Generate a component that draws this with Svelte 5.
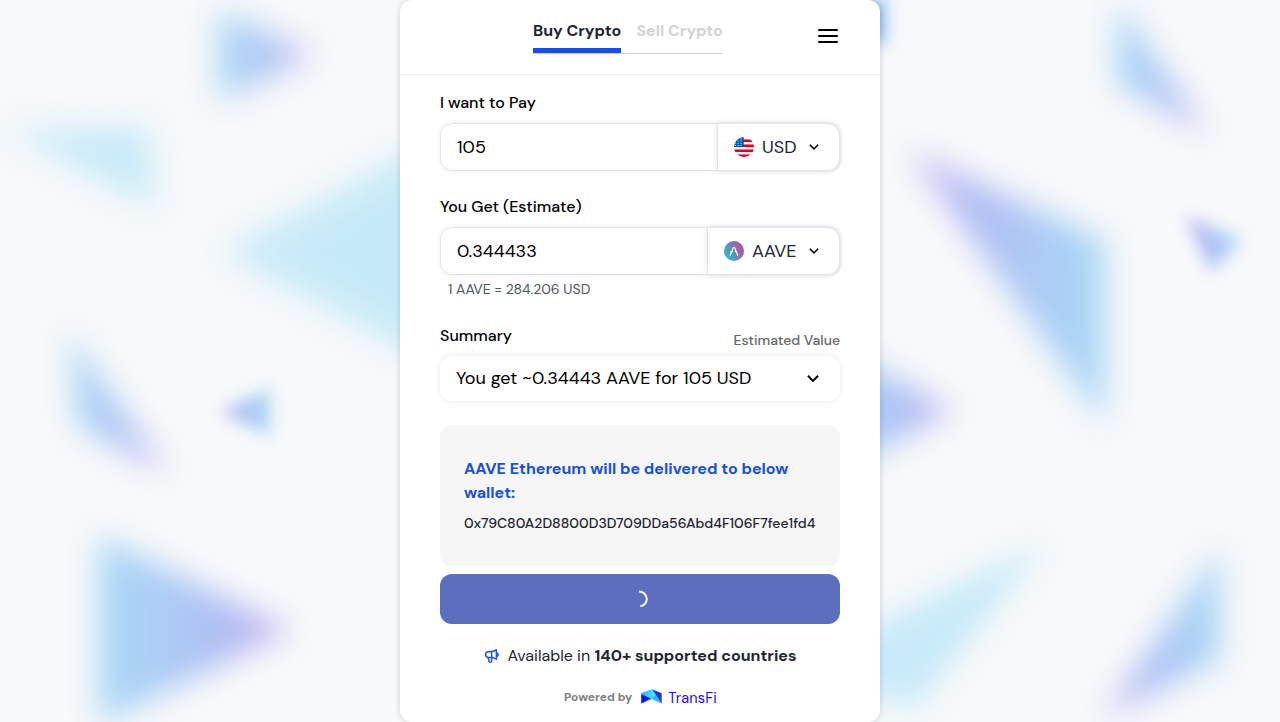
<script>
  // Soft background triangles: corner points, gradient and blur radius.
  const shapes = [
    { p: '219,10 219,101 313,55', g: 'r', b: 16 },
    { p: '6,130 146,127 156,208', g: 'c', b: 16 },
    { p: '222,252 450,132 450,372', g: 'c', b: 16 },
    { p: '68,332 78,426 168,474', g: 'r', b: 15 },
    { p: '220,412 270,388 270,436', g: 'l', b: 8 },
    { p: '99,536 99,724 292,630', g: 'r', b: 15 },
    { p: '1117,2 1117,84 1208,134', g: 'r', b: 15 },
    { p: '908,150 1105,240 1105,424', g: 'l', b: 15 },
    { p: '1185,216 1242,240 1211,272', g: 'l', b: 8 },
    { p: '835,345 835,475 952,410', g: 'r', b: 15 },
    { p: '1044,544 850,636 850,688 915,708', g: 'c', b: 15 },
    { p: '1220,548 1220,660 1102,718', g: 'l', b: 15 },
    { p: '830,22 885,-4 885,46', g: 'd', b: 8 }
  ];
</script>

{#snippet chevron(w, sw)}
  <svg class="chev" width={w} height={w * 0.6} viewBox="0 0 10 6"><path d="M.8 .7 5 4.9 9.2 .7" fill="none" stroke="#000" stroke-width={sw} /></svg>
{/snippet}

<div class="page">
  <svg class="backdrop" viewBox="0 0 1280 722" width="1280" height="722" aria-hidden="true">
    <defs>
      <linearGradient id="r"><stop offset="0" stop-color="#aad8f6" /><stop offset=".3" stop-color="#accdf5" /><stop offset=".65" stop-color="#b1bdf3" /><stop offset="1" stop-color="#cab6f3" /></linearGradient>
      <linearGradient id="l"><stop offset="0" stop-color="#cab6f3" /><stop offset=".35" stop-color="#b1bdf3" /><stop offset=".7" stop-color="#accdf5" /><stop offset="1" stop-color="#aad8f6" /></linearGradient>
      <linearGradient id="c"><stop offset="0" stop-color="#c9eaf9" /><stop offset="1" stop-color="#c6eaf8" /></linearGradient>
      <linearGradient id="d"><stop offset="0" stop-color="#8aa4ec" /><stop offset="1" stop-color="#86baf2" /></linearGradient>
    </defs>
    {#each shapes as s}
      <polygon points={s.p} fill="url(#{s.g})" style="filter: blur({s.b}px)" />
    {/each}
  </svg>

  <main class="card">
    <header>
      <nav class="tabs"><span class="tab active">Buy Crypto</span><span class="tab">Sell Crypto</span></nav>
      <div class="burger"><i></i><i></i><i></i></div>
    </header>
    <div class="body">
      <h2>I want to Pay</h2>
      <div class="field">
        <span class="value">105</span>
        <div class="select usd">
          <svg width="20" height="20" viewBox="0 0 20 20">
            <defs><clipPath id="flag"><circle cx="10" cy="10" r="10" /></clipPath></defs>
            <g clip-path="url(#flag)">
              <rect width="20" height="20" fill="#f0f0f0" />
              <path d="M9 2.5h11v2.6H9zM9 7.5h11v2.5H9zM0 12.5h20v2.4H0zM0 17.5h20V20H0z" fill="#d80027" />
              <rect width="9.7" height="10" fill="#0052b4" />
              <path d="M6.4 1.9h1.2M3.4 4h1.2M6.4 4h1.2M1 6.2h1.2M3.6 6.2h1.2M6.4 6.2h1.2M1 8.5h1.2M3.6 8.5h1.2M6.4 8.5h1.2" stroke="#cfe0f3" stroke-width="1.1" />
            </g>
          </svg>
          <span class="code">USD</span>{@render chevron(10, 1.5)}
        </div>
      </div>
      <h2 class="second">You Get (Estimate)</h2>
      <div class="field">
        <span class="value">0.344433</span>
        <div class="select aave">
          <svg width="20" height="20" viewBox="0 0 20 20">
            <defs><linearGradient id="av" x1="0" y1=".8" x2="1" y2=".2"><stop offset=".1" stop-color="#2ebac6" /><stop offset=".9" stop-color="#b6509e" /></linearGradient></defs>
            <circle cx="10" cy="10" r="10" fill="url(#av)" />
            <path d="M6.3 14.2 9.3 6.8Q10 5.6 10.7 6.8L13.7 14.2M6.9 10.6H8.6M11.4 10.6H12" fill="none" stroke="#fff" stroke-width="1.1" stroke-linecap="round" />
          </svg>
          <span class="code">AAVE</span>{@render chevron(10, 1.5)}
        </div>
      </div>
      <p class="rate">1 AAVE = 284.206 USD</p>
      <div class="sumhead"><h2>Summary</h2><span class="est">Estimated Value</span></div>
      <div class="summary"><span>You get ~0.34443 AAVE for 105 USD</span>{@render chevron(12, 1.7)}</div>
      <section class="wallet">
        <strong>AAVE Ethereum will be delivered to below<br />wallet:</strong>
        <span class="addr">0x79C80A2D8800D3D709DDa56Abd4F106F7fee1fd4</span>
      </section>
      <div class="submit"><svg width="20" height="20" viewBox="0 0 20 20"><path d="M9 2.6A7.6 7.4 0 0 1 10.4 17.3" fill="none" stroke="#fff" stroke-width="2" /></svg></div>
      <div class="avail">
        <svg width="16" height="16" viewBox="0 0 16 16" fill="none" stroke="#2456dc" stroke-width="1.5" stroke-linejoin="round" stroke-linecap="round"><path d="M12.4 1.9V11.2Q9.8 9.4 4 9.3Q1.6 9 1.6 6.4Q1.6 4 4.2 3.8Q9.8 3.9 12.4 1.9ZM7.6 3.8V9.4M13 4.8Q15.4 6.6 13 8.5M4 9.4 5 13.2Q5.4 14.5 6.7 14.2Q7.8 13.8 7.6 12.6V9.6" /></svg>
        <span>Available in</span><b>140+ supported countries</b>
      </div>
      <footer>
        <span class="pow">Powered by</span>
        <svg width="21" height="15" viewBox="0 0 21 15">
          <defs><linearGradient id="lg"><stop offset="0" stop-color="#2fb4fb" /><stop offset=".6" stop-color="#45e4f7" /></linearGradient></defs>
          <path d="M.3 4 11 .3 20.7 14.5 10.8 9.8.3 14.5Z" fill="url(#lg)" />
          <path d="M.3 5.2 9.8 9.6.3 14.5Z" fill="#1713e8" /><path d="M11 .3 20.7 4.2V14.5Z" fill="#1a35dd" />
          <path d="M.3 14.5 9.8 9.6 10.8 9.8 5 12.6Z" fill="#168cff" /><path d="M14.8 5.9 20.7 14.5 10.8 9.8Z" fill="#32b4fb" />
        </svg>
        <span class="brand">TransFi</span>
      </footer>
    </div>
  </main>
</div>

<style>
  :global(body) { margin: 0; background: #f8f9fb; }
  .page { position: relative; width: 1280px; height: 722px; overflow: hidden; display: flex; justify-content: center; background: #f7f9fb; font-family: 'DM Sans', Inter, sans-serif; color: #000; }
  .backdrop { position: absolute; left: 0; top: 0; }
  .card { position: relative; width: 480px; height: 722px; background: #fff; border-radius: 12px; box-shadow: 0 0 6px rgba(0, 0, 0, .17); box-sizing: border-box; }
  header { height: 75px; box-sizing: border-box; border-bottom: 1px solid #eee; display: flex; justify-content: space-between; padding: 19px 42px 0 133px; }
  .tabs { display: flex; width: 190px; height: 35px; box-sizing: border-box; border-bottom: 1px solid #d1d1d6; }
  .tab { font-size: 16px; line-height: 24px; font-weight: 700; color: #d2d2d4; height: 29px; white-space: nowrap; }
  .tab.active { color: #1d2433; border-bottom: 5px solid #1a4fd8; margin-right: 15.3px; }
  .burger { margin-top: 10px; width: 20px; display: flex; flex-direction: column; gap: 4px; }
  .burger i { height: 2px; background: #000; border-radius: 1px; }
  .body { padding: 0 40px; }
  h2 { margin: 16px 0 0; font-size: 16px; font-weight: 500; line-height: 24px; }
  .field { margin-top: 8px; height: 48px; box-sizing: border-box; border: 1px solid #dfe5f0; border-radius: 12px; display: flex; justify-content: space-between; box-shadow: 0 0 5px rgba(0, 0, 0, .08); }
  .value { padding-left: 16px; font-size: 18px; line-height: 46px; }
  .select { margin: -1px; display: flex; align-items: center; box-sizing: border-box; border: 1px solid #dfe5f0; border-radius: 0 12px 12px 0; box-shadow: 0 0 5px rgba(0, 0, 0, .12); padding-left: 16px; background: #fff; color: #1d2433; font-size: 18px; }
  .usd { width: 123px; }
  .aave { width: 133px; }
  .code { margin-left: 8px; flex: 1; }
  .chev { margin-right: 20px; }
  h2.second { margin-top: 24px; }
  .rate { margin: 4px 0 0 8px; font-size: 14px; line-height: 20px; color: #4b5565; }
  .sumhead { display: flex; justify-content: space-between; height: 57px; }
  .sumhead h2 { margin-top: 25px; }
  .est { margin-top: 31px; font-size: 14px; line-height: 20px; font-weight: 500; color: #666; }
  .summary { height: 45px; box-sizing: border-box; border-radius: 12px; box-shadow: 0 0 5px rgba(0, 0, 0, .1); padding: 0 1px 0 16px; display: flex; align-items: center; justify-content: space-between; font-size: 18px; line-height: 24px; }
  .summary > span { margin-top: -1px; }
  .wallet { margin-top: 24px; height: 141px; box-sizing: border-box; padding: 32px 24px; border-radius: 12px; background: #f6f6f6; white-space: nowrap; }
  .wallet strong { display: block; color: #1a4fd8; font-size: 16px; line-height: 24px; font-weight: 700; }
  .addr { display: block; font-size: 14px; line-height: 20px; font-weight: 500; color: #1d2433; margin-top: 8px; }
  .submit { margin-top: 8px; height: 50px; border-radius: 12px; background: #5e6ebf; display: flex; align-items: center; justify-content: center; }
  .avail { margin: 20px 0 0 44px; height: 24px; display: flex; align-items: center; font-size: 16px; line-height: 24px; color: #1d2433; white-space: nowrap; }
  .avail svg { margin-right: 7.5px; }
  .avail b { margin-left: 4.4px; font-weight: 700; }
  footer { margin: 19px 0 0 124px; height: 20px; display: flex; align-items: center; white-space: nowrap; }
  .pow { font-size: 12px; font-weight: 700; color: #808080; }
  footer svg { margin: -2px 6px 0 9px; }
  .brand { font-size: 14.5px; line-height: 20px; letter-spacing: .15px; color: #2609e0; margin-top: 1px; }
</style>
